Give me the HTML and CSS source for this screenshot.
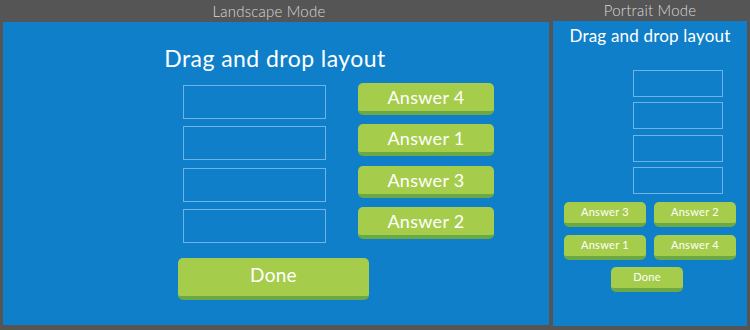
FILE: index.html
```html
<!DOCTYPE html>
<html>
<head>
<meta charset="utf-8">
<link rel="stylesheet" href="styles.css">
</head>
<body>
<div class="stage">
  <section class="mode landscape">
    <div class="label">Landscape Mode</div>
    <div class="panel">
      <h1 class="title">Drag and drop layout</h1>
      <div class="board">
        <div class="slots">
          <div class="slot"></div>
          <div class="slot"></div>
          <div class="slot"></div>
          <div class="slot"></div>
        </div>
        <div class="answers">
          <div class="btn">Answer 4</div>
          <div class="btn">Answer 1</div>
          <div class="btn">Answer 3</div>
          <div class="btn">Answer 2</div>
        </div>
      </div>
      <div class="btn done">Done</div>
    </div>
  </section>
  <section class="mode portrait">
    <div class="label">Portrait Mode</div>
    <div class="panel">
      <h1 class="title">Drag and drop layout</h1>
      <div class="slots">
        <div class="slot"></div>
        <div class="slot"></div>
        <div class="slot"></div>
        <div class="slot"></div>
      </div>
      <div class="answers">
        <div class="btn">Answer 3</div>
        <div class="btn">Answer 2</div>
        <div class="btn">Answer 1</div>
        <div class="btn">Answer 4</div>
      </div>
      <div class="btn done">Done</div>
    </div>
  </section>
</div>
</body>
</html>
```

FILE: styles.css
```css
* { box-sizing: border-box; }
html, body { margin: 0; padding: 0; }
body {
  background: #555555;
  font-family: Lato, "Open Sans", sans-serif;
  width: 750px;
  height: 330px;
  overflow: hidden;
}
.stage {
  display: flex;
  gap: 4px;
  padding: 0 3px;
}
.mode { display: flex; flex-direction: column; }
.label {
  color: #d8d8d8;
  font-weight: 300;
  font-size: 15px;
  line-height: 22px;
  text-align: center;
  letter-spacing: 0.2px;
}
.landscape .label { padding-right: 14px; }
.panel {
  background: #0f7fc9;
  color: #fff;
}
.title {
  margin: 0;
  font-weight: 400;
  text-align: center;
}
.slot {
  border: 1px solid #6db3e8;
}
.btn {
  background: #a5cd4b;
  border-bottom: 4px solid #6ba945;
  color: #fff;
  text-align: center;
  border-radius: 5px;
  letter-spacing: 0.3px;
}

/* Landscape */
.landscape .panel { width: 546px; height: 303px; }
.landscape .title {
  font-size: 23px;
  line-height: 28px;
  padding-top: 22px;
  margin-left: -2px;
  letter-spacing: 0.45px;
}
.landscape .board {
  display: flex;
  gap: 32px;
  margin-top: 11px;
  margin-left: 180px;
}
.landscape .slots {
  display: flex;
  flex-direction: column;
  gap: 7.3px;
  padding-top: 2px;
}
.landscape .slot { width: 143px; height: 34px; }
.landscape .answers {
  display: flex;
  flex-direction: column;
  gap: 9.3px;
}
.landscape .answers .btn {
  width: 136px;
  height: 32px;
  font-size: 18px;
  line-height: 28px;
}
.landscape .done {
  width: 191px;
  height: 42px;
  margin: 15px 0 0 175px;
  font-size: 19px;
  line-height: 34px;
}

/* Portrait */
.portrait .label { margin-top: -1px; }
.portrait .panel { width: 194px; height: 305px; }
.portrait .title {
  font-size: 17px;
  line-height: 20px;
  padding-top: 5px;
  letter-spacing: 0.2px;
}
.portrait .slots {
  display: flex;
  flex-direction: column;
  gap: 5.4px;
  margin: 24px 0 0 80px;
}
.portrait .slot { width: 90px; height: 27px; }
.portrait .answers {
  display: grid;
  grid-template-columns: 82px 82px;
  column-gap: 8px;
  row-gap: 8px;
  margin: 8px 0 0 11px;
}
.portrait .btn {
  height: 25px;
  font-size: 11px;
  line-height: 20px;
}
.portrait .done {
  width: 72px;
  margin: 7px 0 0 58px;
}
```
